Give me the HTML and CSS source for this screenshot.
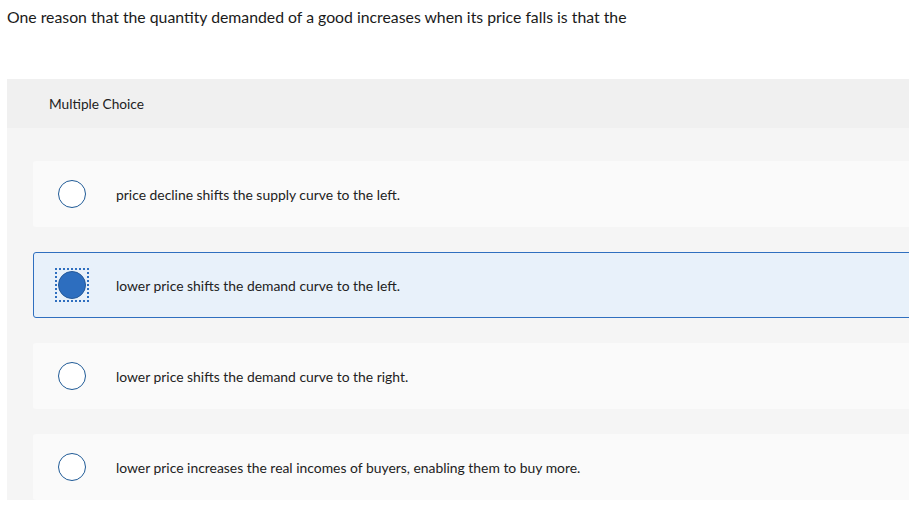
FILE: index.html
```html
<!DOCTYPE html>
<html lang="en">
<head>
<meta charset="utf-8">
<title>Multiple Choice</title>
<link rel="stylesheet" href="styles.css">
</head>
<body>
<main class="page">
  <p class="prompt">One reason that the quantity demanded of a good increases when its price falls is that the</p>
  <section class="panel">
    <header class="panel-head">Multiple Choice</header>
    <div class="choices">
      <label class="choice">
        <span class="radio"></span>
        <span class="choice-text">price decline shifts the supply curve to the left.</span>
      </label>
      <label class="choice choice-selected">
        <span class="radio-focus"><span class="radio radio-on"></span></span>
        <span class="choice-text">lower price shifts the demand curve to the left.</span>
      </label>
      <label class="choice">
        <span class="radio"></span>
        <span class="choice-text">lower price shifts the demand curve to the right.</span>
      </label>
      <label class="choice">
        <span class="radio"></span>
        <span class="choice-text">lower price increases the real incomes of buyers, enabling them to buy more.</span>
      </label>
    </div>
  </section>
</main>
</body>
</html>
```
FILE: styles.css
```css
html, body {
  margin: 0;
  padding: 0;
  background: #ffffff;
  overflow: hidden;
}
body {
  font-family: "Lato", "Open Sans", "Liberation Sans", sans-serif;
  color: #222222;
}
.page {
  padding: 0 0 0 7px;
}
.prompt {
  margin: 0;
  padding-top: 7px;
  height: 79px;
  box-sizing: border-box;
  font-size: 15.8px;
  line-height: 20px;
  color: #1a1a1a;
}
.panel {
  background: #f5f5f5;
  margin-right: -30px;
}
.panel-head {
  background: #f0f0f0;
  height: 49px;
  display: flex;
  align-items: center;
  padding-left: 42px;
  font-size: 13.7px;
  color: #222;
}
.choices {
  display: flex;
  flex-direction: column;
  gap: 25px;
  padding: 33px 0 0 26px;
}
.choice {
  display: flex;
  align-items: center;
  height: 66px;
  box-sizing: border-box;
  border: 1px solid transparent;
  border-radius: 3px;
  background: #fafafa;
  padding-left: 24px;
}
.choice-selected {
  background: #e8f1fa;
  border-color: #2f6fbf;
}
.radio {
  width: 28px;
  height: 28px;
  box-sizing: border-box;
  border-radius: 50%;
  border: 1.5px solid #1f5a96;
  background: #ffffff;
  flex: none;
}
.radio-focus {
  display: flex;
  flex: none;
  padding: 1px;
  margin: 0 -1px;
  outline: 2px dotted #2f6fbf;
}
.radio-on {
  background: #2d6ebf;
  border-color: #24599a;
}
.choice-text {
  margin-left: 30px;
  font-size: 13.9px;
  color: #222;
}
```
